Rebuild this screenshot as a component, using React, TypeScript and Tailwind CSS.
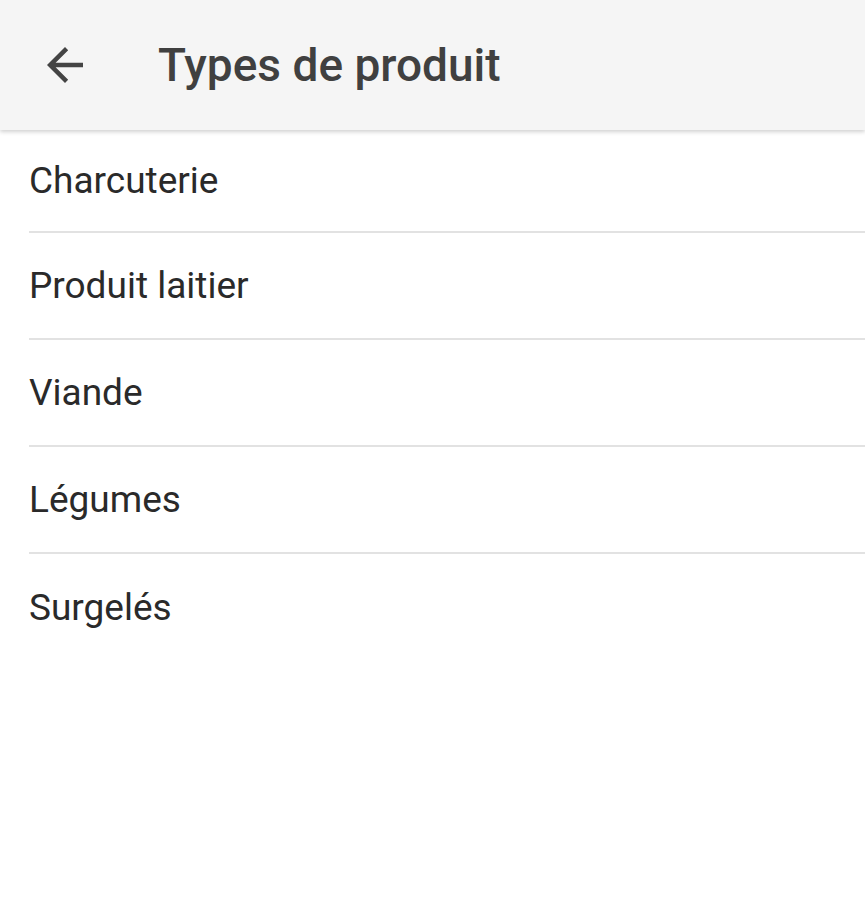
import React from 'react';

const items = ['Charcuterie', 'Produit laitier', 'Viande', 'Légumes', 'Surgelés'];

export default function App() {
    return (
        <div className="min-h-[900px] bg-white font-['Roboto',sans-serif]">
            {/* App bar */}
            <header className="relative z-10 flex h-[130px] items-center bg-[#f5f5f5] shadow-[0_2px_4px_rgba(0,0,0,0.18)]">
                <button className="ml-[38px] flex h-[54px] w-[54px] items-center justify-center text-[#444]">
                    <svg viewBox="0 0 24 24" className="h-[54px] w-[54px]" fill="currentColor">
                        <path d="M20 11H7.83l5.59-5.59L12 4l-8 8 8 8 1.41-1.41L7.83 13H20v-2z" />
                    </svg>
                </button>
                <h1 className="ml-[66px] text-[46px] font-medium leading-none text-[#404040]">
                    Types de produit
                </h1>
            </header>

            {/* List */}
            <ul className="pl-[29px]">
                {items.map((item, i) => (
                    <li
                        key={item}
                        className={`flex items-center text-[37px] text-[#2a2a2a] ${i === 0 ? 'h-[103px]' : 'h-[107px]'} ${
                            i < items.length - 1 ? 'border-b-2 border-[#e2e2e2]' : ''
                        }`}
                    >
                        {item}
                    </li>
                ))}
            </ul>
        </div>
    );
}
